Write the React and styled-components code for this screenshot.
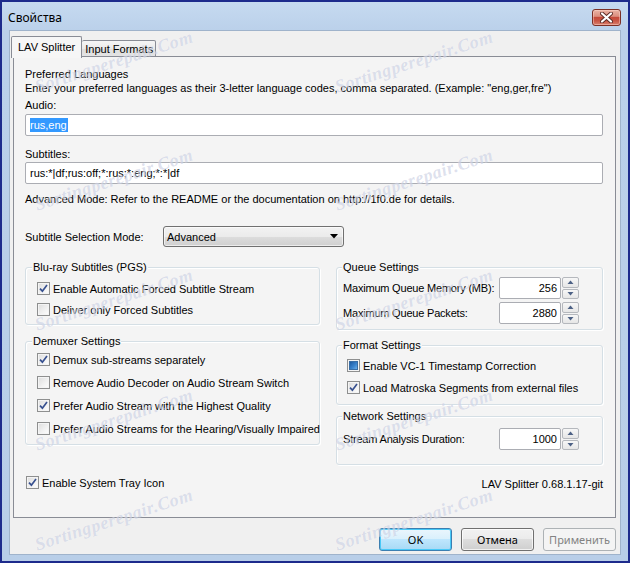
import React from "react";
import styled, { createGlobalStyle } from "styled-components";

const GlobalStyle = createGlobalStyle`
  html, body { margin: 0; padding: 0; background: #ffffff; }
  body { font-family: "Liberation Sans", Arial, sans-serif; font-size: 11px; color: #000; }
  * { box-sizing: border-box; }
`;

const Window = styled.div`
  position: relative;
  width: 630px;
  height: 563px;
  border: 2px solid #1d2b8c;
  background: linear-gradient(#c6daf0 0px, #bad0ea 30px, #b8cee8 100%);
  display: flex;
  flex-direction: column;
  padding: 0 7px 6px 7px;
  overflow: hidden;
`;

const TitleBar = styled.div`
  height: 28px;
  flex: none;
  display: flex;
  justify-content: space-between;
  align-items: flex-start;
`;

const TitleText = styled.div`
  font-family: "Noto Sans", "Open Sans", sans-serif;
  font-size: 12px;
  line-height: 16px;
  margin: 8px 0 0 -1px;
  color: #000;
`;

const CloseButton = styled.div`
  width: 29px;
  height: 17px;
  margin-top: 7px;
  border: 1px solid #7c3026;
  border-radius: 3px;
  background: linear-gradient(#eab3a4 0%, #dc8f7f 42%, #c54a3a 50%, #c95645 72%, #d8806e 100%);
  box-shadow: inset 0 0 0 1px rgba(255, 220, 210, 0.45);
  display: flex;
  align-items: center;
  justify-content: center;
`;

const Client = styled.div`
  flex: 1;
  background: #f0f0f0;
  border: 1px solid #9fb3cb;
  display: flex;
  flex-direction: column;
  padding: 5px 4px 0 3px;
`;

const TabStrip = styled.div`
  display: flex;
  align-items: flex-end;
  height: 21px;
  margin-left: -2px;
  margin-bottom: -1px;
  position: relative;
  z-index: 1;
`;

const Tab = styled.div`
  height: ${(p) => (p.$active ? "22px" : "17px")};
  padding: ${(p) => (p.$active ? "4px 6px 0 6px" : "2px 2px 0 3px")};
  border: 1px solid #898c95;
  border-bottom: ${(p) => (p.$active ? "none" : "1px solid #898c95")};
  border-left: ${(p) => (p.$active ? "1px solid #898c95" : "none")};
  border-radius: 2px 2px 0 0;
  background: ${(p) =>
    p.$active ? "#f6f6f6" : "linear-gradient(#f5f5f5 0%, #ebebeb 50%, #dedede 50%, #e3e3e3 100%)"};
  font-size: 11px;
  line-height: 13px;
  align-self: ${(p) => (p.$active ? "flex-start" : "flex-end")};
  margin-bottom: ${(p) => (p.$active ? "-1px" : "0")};
  white-space: nowrap;
`;

const Panel = styled.div`
  height: 462px;
  flex: none;
  border: 1px solid #898c95;
  background: #f4f4f4;
  padding: 10px 12px 0 11px;
  display: flex;
  flex-direction: column;
`;

const Label = styled.div`
  line-height: 14px;
  margin-top: ${(p) => p.$mt || 0}px;
  white-space: nowrap;
`;

const TextField = styled.div`
  height: 22px;
  margin-top: ${(p) => p.$mt || 0}px;
  border: 1px solid #abadb3;
  border-radius: 2px;
  background: #ffffff;
  display: flex;
  align-items: center;
  padding-left: 4px;
  white-space: nowrap;
`;

const Selected = styled.span`
  background: #3399ff;
  color: #ffffff;
  line-height: 14px;
  padding: 0 1px 0 0;
`;

const ModeRow = styled.div`
  display: flex;
  align-items: center;
  margin-top: 20px;
`;

const ModeLabel = styled.div`
  width: 138px;
`;

const Combo = styled.div`
  width: 181px;
  height: 21px;
  border: 1px solid #707070;
  border-radius: 3px;
  background: linear-gradient(#f2f2f2 0%, #ebebeb 50%, #dddddd 50%, #cfcfcf 100%);
  box-shadow: inset 0 0 0 1px rgba(255, 255, 255, 0.6);
  display: flex;
  align-items: center;
  justify-content: space-between;
  padding: 0 5px 0 3px;
`;

const Columns = styled.div`
  display: grid;
  grid-template-columns: 295px 267px;
  column-gap: 16px;
  margin-top: 13px;
  align-items: start;
`;

const Column = styled.div`
  display: flex;
  flex-direction: column;
`;

const Group = styled.div`
  border: 1px solid #d5dfe5;
  border-radius: 3px;
  box-shadow: inset 1px 1px 0 #ffffff, 1px 1px 0 #ffffff;
  margin-top: ${(p) => p.$mt}px;
  display: flex;
  flex-direction: column;
  padding-bottom: ${(p) => p.$pb}px;
`;

const GroupTitle = styled.div`
  align-self: flex-start;
  margin: -8px 0 0 ${(p) => p.$ml}px;
  padding: 0 1px;
  line-height: 14px;
  background: #f4f4f4;
  white-space: nowrap;
`;

const Rows = styled.div`
  display: flex;
  flex-direction: column;
  margin-top: ${(p) => p.$mt}px;
  padding-left: ${(p) => p.$pl}px;
  gap: ${(p) => p.$gap}px;
`;

const CheckRow = styled.div`
  display: flex;
  align-items: center;
  gap: 3px;
  height: 17px;
  white-space: nowrap;
`;

const Box = styled.span`
  width: 13px;
  height: 13px;
  flex: none;
  border: 1px solid #8e8f8f;
  background: linear-gradient(135deg, #dcdcdc 0%, #f2f2f2 60%, #fefefe 100%);
  box-shadow: inset 0 0 0 1px #f4f4f4;
  display: flex;
  align-items: center;
  justify-content: center;
`;

const Indeterminate = styled.span`
  width: 9px;
  height: 9px;
  border: 1px solid #3a6ea5;
  background: linear-gradient(135deg, #1d5aa0 0%, #3d86cf 60%, #6db0e8 100%);
`;

const SpinRow = styled.div`
  display: flex;
  align-items: center;
  height: 22px;
`;

const SpinLabel = styled.div`
  width: 156px;
  white-space: nowrap;
  letter-spacing: -0.2px;
`;

const SpinInput = styled.div`
  width: 62px;
  height: 22px;
  border: 1px solid #abadb3;
  border-radius: 2px;
  background: #ffffff;
  text-align: right;
  padding-right: 3px;
  line-height: 20px;
`;

const SpinButtons = styled.div`
  width: 17px;
  height: 22px;
  margin-left: 1px;
  display: flex;
  flex-direction: column;
  gap: 1px;
`;

const SpinHalf = styled.div`
  flex: 1;
  border: 1px solid #b5b8bd;
  border-radius: 2px;
  background: linear-gradient(#f7f7f7, #e6e6e6);
  display: flex;
  align-items: center;
  justify-content: center;
`;

const Footer = styled.div`
  display: flex;
  justify-content: space-between;
  align-items: flex-start;
  margin-top: 9px;
  padding-left: 1px;
`;

const Version = styled.div`
  line-height: 17px;
  padding-top: 2px;
`;

const ButtonRow = styled.div`
  display: flex;
  justify-content: flex-end;
  gap: 9px;
  margin-top: 10px;
`;

const Button = styled.div`
  width: 73px;
  height: 23px;
  border-radius: 3px;
  border: 1px solid ${(p) => (p.$primary ? "#3c7fb1" : p.$disabled ? "#adb2b5" : "#707070")};
  background: ${(p) =>
    p.$primary
      ? "linear-gradient(#eaf6fd 0%, #d9f0fc 50%, #bee6fd 50%, #a7d9f5 100%)"
      : p.$disabled
      ? "#f4f4f4"
      : "linear-gradient(#f2f2f2 0%, #ebebeb 50%, #dddddd 50%, #cfcfcf 100%)"};
  box-shadow: ${(p) =>
    p.$disabled ? "none" : p.$primary ? "inset 0 0 0 1px #48c9f7" : "inset 0 0 0 1px rgba(255,255,255,0.7)"};
  color: ${(p) => (p.$disabled ? "#838383" : "#000")};
  display: flex;
  align-items: center;
  justify-content: center;
  font-family: "Noto Sans", "Open Sans", sans-serif;
  font-size: 11px;
`;

const Watermark = styled.div`
  position: absolute;
  transform: translate(-50%, -50%) rotate(-18deg);
  font-family: "Liberation Serif", serif;
  font-style: italic;
  font-weight: bold;
  font-size: 18px;
  letter-spacing: 0.5px;
  color: rgba(150, 162, 200, 0.32);
  text-shadow: 0 0 1px rgba(255, 255, 255, 0.6);
  white-space: nowrap;
  pointer-events: none;
  z-index: 5;
`;

const marks = [];
[112, 412].forEach((x) => {
  [60, 178, 298, 418, 518].forEach((y) => marks.push({ x, y }));
});

const Check = () => (
  <svg width="9" height="9" viewBox="0 0 9 9">
    <path d="M1 4.6 L3.4 7.2 L8 1" fill="none" stroke="#37508f" strokeWidth="1.7" />
  </svg>
);

const CheckBox = ({ state }) => (
  <Box>{state === "on" ? <Check /> : state === "mixed" ? <Indeterminate /> : null}</Box>
);

const Option = ({ state, children }) => (
  <CheckRow>
    <CheckBox state={state} />
    <span>{children}</span>
  </CheckRow>
);

const Arrow = ({ up }) => (
  <svg width="7" height="4" viewBox="0 0 7 4">
    <path d={up ? "M0.5 4 L3.5 0.5 L6.5 4 Z" : "M0.5 0 L3.5 3.5 L6.5 0 Z"} fill="#4d6185" />
  </svg>
);

const Spin = ({ label, value }) => (
  <SpinRow>
    <SpinLabel>{label}</SpinLabel>
    <SpinInput>{value}</SpinInput>
    <SpinButtons>
      <SpinHalf>
        <Arrow up />
      </SpinHalf>
      <SpinHalf>
        <Arrow />
      </SpinHalf>
    </SpinButtons>
  </SpinRow>
);

export default function App() {
  return (
    <>
      <GlobalStyle />
      <Window>
        <TitleBar>
          <TitleText>Свойства</TitleText>
          <CloseButton>
            <svg width="13" height="11" viewBox="0 0 13 11">
              <path d="M2 1.5 L11 9.5 M11 1.5 L2 9.5" stroke="#5a2a24" strokeWidth="4" strokeLinecap="round" />
              <path d="M2 1.5 L11 9.5 M11 1.5 L2 9.5" stroke="#ffffff" strokeWidth="2.2" strokeLinecap="round" />
            </svg>
          </CloseButton>
        </TitleBar>
        <Client>
          <TabStrip>
            <Tab $active>LAV Splitter</Tab>
            <Tab>Input Formats</Tab>
          </TabStrip>
          <Panel>
            <Label>Preferred Languages</Label>
            <Label>
              Enter your preferred languages as their 3-letter language codes, comma separated. (Example: "eng,ger,fre")
            </Label>
            <Label $mt={3}>Audio:</Label>
            <TextField $mt={2}>
              <Selected>rus,eng</Selected>
            </TextField>
            <Label $mt={11}>Subtitles:</Label>
            <TextField $mt={1}>rus:*|df;rus:off;*:rus;*:eng;*:*|df</TextField>
            <Label $mt={8}>Advanced Mode: Refer to the README or the documentation on http://1f0.de for details.</Label>
            <ModeRow>
              <ModeLabel>Subtitle Selection Mode:</ModeLabel>
              <Combo>
                <span>Advanced</span>
                <svg width="8" height="5" viewBox="0 0 8 5">
                  <path d="M0 0 L8 0 L4 4.5 Z" fill="#000" />
                </svg>
              </Combo>
            </ModeRow>
            <Columns>
              <Column>
                <Group $mt={7} $pb={6}>
                  <GroupTitle $ml={6}>Blu-ray Subtitles (PGS)</GroupTitle>
                  <Rows $mt={6} $gap={4} $pl={11}>
                    <Option state="on">Enable Automatic Forced Subtitle Stream</Option>
                    <Option>Deliver only Forced Subtitles</Option>
                  </Rows>
                </Group>
                <Group $mt={16} $pb={7}>
                  <GroupTitle $ml={6}>Demuxer Settings</GroupTitle>
                  <Rows $mt={3} $gap={6} $pl={11}>
                    <Option state="on">Demux sub-streams separately</Option>
                    <Option>Remove Audio Decoder on Audio Stream Switch</Option>
                    <Option state="on">Prefer Audio Stream with the Highest Quality</Option>
                    <Option>Prefer Audio Streams for the Hearing/Visually Impaired</Option>
                  </Rows>
                </Group>
              </Column>
              <Column>
                <Group $mt={7} $pb={5}>
                  <GroupTitle $ml={5}>Queue Settings</GroupTitle>
                  <Rows $mt={3} $gap={3} $pl={6}>
                    <Spin label="Maximum Queue Memory (MB):" value="256" />
                    <Spin label="Maximum Queue Packets:" value="2880" />
                  </Rows>
                </Group>
                <Group $mt={15} $pb={8}>
                  <GroupTitle $ml={5}>Format Settings</GroupTitle>
                  <Rows $mt={5} $gap={5} $pl={10}>
                    <Option state="mixed">Enable VC-1 Timestamp Correction</Option>
                    <Option state="on">Load Matroska Segments from external files</Option>
                  </Rows>
                </Group>
                <Group $mt={11} $pb={14}>
                  <GroupTitle $ml={5}>Network Settings</GroupTitle>
                  <Rows $mt={5} $gap={0} $pl={6}>
                    <Spin label="Stream Analysis Duration:" value="1000" />
                  </Rows>
                </Group>
              </Column>
            </Columns>
            <Footer>
              <Option state="on">Enable System Tray Icon</Option>
              <Version>LAV Splitter 0.68.1.17-git</Version>
            </Footer>
          </Panel>
          <ButtonRow>
            <Button $primary>OK</Button>
            <Button>Отмена</Button>
            <Button $disabled>Применить</Button>
          </ButtonRow>
        </Client>
        {marks.map((m, i) => (
          <Watermark key={i} style={{ left: m.x, top: m.y }}>
            Sortingperepair.Com
          </Watermark>
        ))}
      </Window>
    </>
  );
}
